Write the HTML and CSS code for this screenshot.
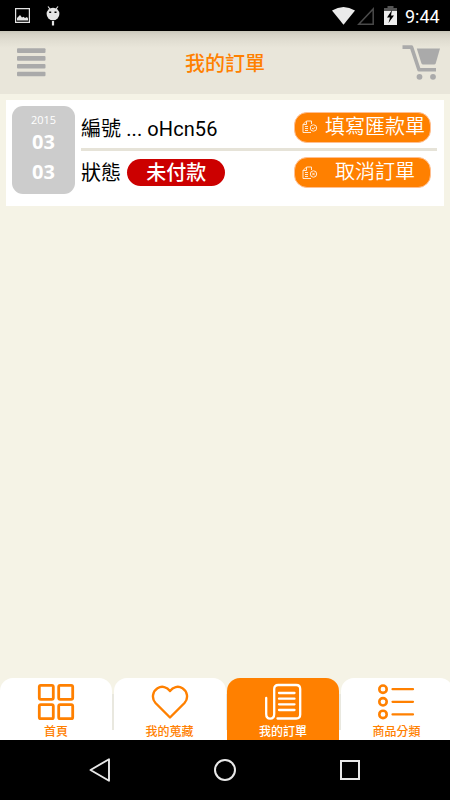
FILE: index.html
```html
<!DOCTYPE html>
<html lang="zh-Hant">
<head>
<meta charset="utf-8">
<title>我的訂單</title>
<link rel="stylesheet" href="styles.css">
</head>
<body>
<div class="screen">
  <div class="status">
    <svg class="s-pic" width="15" height="15" viewBox="0 0 15 15"><path d="M.6.6h13.8v13.8H.6z" fill="none" stroke="#e4e4e4" stroke-width="1.2"/><path d="M2 12.500V10l3-3 2 2.500 1.500-.8L10 10l2-1 1 1.500v2z" fill="#e4e4e4"/></svg>
    <svg class="s-bug" width="14" height="20" viewBox="0 0 14 20"><path d="M2 .5 4 3M12 .5 10 3" stroke="#e4e4e4" stroke-width="1.200"/><ellipse cx="7" cy="8" rx="6.400" ry="6.300" fill="#e4e4e4"/><path d="M3.200 6.300h2M8.500 6.300h2" stroke="#000" stroke-width="1.500"/><path d="M7 15v4.500" stroke="#e4e4e4" stroke-width="2.200"/></svg>
    <span class="grow"></span>
    <svg class="s-wifi" width="23" height="18" viewBox="0 0 23 18"><path d="M0 3.500Q11.500-3.500 23 3.500L11.500 17.700z" fill="#eaeaea"/></svg>
    <svg class="s-cell" width="18" height="18" viewBox="0 0 18 18"><path d="M1.800 17.200H16.200V2z" fill="none" stroke="#4a4a4a" stroke-width="1.500"/></svg>
    <svg class="s-bat" width="13" height="19" viewBox="0 0 13 19"><path d="M3.500 0h6v2H13v3H0V2h3.500z" fill="#555"/><path d="M0 5h13v14H0z" fill="#eee"/><path d="M8 4 3 11.500h3L4.500 17 10 9.500H7z" fill="#000"/></svg>
    <span class="clock">9:44</span>
  </div>
  <header class="header">
    <svg class="menu" width="29" height="29" viewBox="0 0 29 29"><g fill="#aaa"><rect y=".3" width="28.500" height="4.600" rx="1"/><rect y="8.100" width="28.500" height="4.600" rx="1"/><rect y="15.900" width="28.500" height="4.600" rx="1"/><rect y="23.700" width="28.500" height="4.600" rx="1"/></g></svg>
    <h1 class="title">我的訂單</h1>
    <svg class="cart" width="38" height="36" viewBox="0 0 38 36"><path d="M.5 2.100H9.500L17 24.800h17" fill="none" stroke="#aaa" stroke-width="3.600" stroke-linejoin="round"/><path d="M14.800 3.500H38L33.700 18.500q-.5 1-1.500 1H21q-1 0-1.500-1z" fill="#aaa"/><circle cx="17.500" cy="31.800" r="2.900" fill="#aaa"/><circle cx="31" cy="31.800" r="2.900" fill="#aaa"/></svg>
  </header>
  <main class="content">
    <article class="card">
      <div class="date"><span class="year">2015</span><b>03</b><b>03</b></div>
      <div class="info">
        <div class="row">
          <span class="label">編號 ... oHcn56</span>
          <a class="btn"><svg width="16" height="14" viewBox="0 0 16 14" fill="none" stroke="#ffe9d4" stroke-width="1"><path d="M9.500 4V1H4.500L1 4.500V12.500h8M1 4.500h3.500V1M3 6.500h3M3 8.500h3M3 10.500h3"/><circle cx="11.500" cy="8" r="3.200"/><path d="m10 8 1.200 1.200L13.200 7"/></svg><span>填寫匯款單</span></a>
        </div>
        <div class="row second">
          <span class="label">狀態</span><span class="pill">未付款</span>
          <a class="btn"><svg width="16" height="14" viewBox="0 0 16 14" fill="none" stroke="#ffe9d4" stroke-width="1"><path d="M9.500 4V1H4.500L1 4.500V12.500h8M1 4.500h3.500V1M3 6.500h3M3 8.500h3M3 10.500h3"/><circle cx="11.500" cy="8" r="3.200"/><path d="m10.200 6.700 2.600 2.600m0-2.600-2.600 2.600"/></svg><span>取消訂單</span></a>
        </div>
      </div>
    </article>
  </main>
  <nav class="tabs">
    <a class="tab"><svg width="38" height="38" viewBox="0 0 38 38" fill="none" stroke="#ff8000" stroke-width="2.800"><rect x="2.300" y="2.300" width="14" height="14" rx="1.500"/><rect x="21.700" y="2.300" width="14" height="14" rx="1.500"/><rect x="2.300" y="21.700" width="14" height="14" rx="1.500"/><rect x="21.700" y="21.700" width="14" height="14" rx="1.500"/></svg><span>首頁</span></a>
    <a class="tab"><svg width="38" height="38" viewBox="0 0 38 38" fill="none" stroke="#ff8000" stroke-width="2.400" stroke-linejoin="round"><path d="M19 34.500 4.500 20C0 15 2 8 6.500 5.200 11 2.500 16 4 19 8c3-4 8-5.500 12.500-2.800C36 8 38 15 33.500 20z"/></svg><span>我的蒐藏</span></a>
    <a class="tab active"><svg width="38" height="38" viewBox="0 0 38 38" fill="none" stroke="#fff" stroke-width="2.300" stroke-linecap="round"><path d="M2.200 15v16q0 4.600 4 4.600t4-4.600V6q0-4 4-4h18q4 0 4 4v25.500q0 4-4 4H13.500M15 10h15.500M15 15.700h15.500M15 21.300h15.500M15 27h15.500"/></svg><span>我的訂單</span></a>
    <a class="tab"><svg width="38" height="38" viewBox="0 0 38 38" fill="none" stroke="#ff8000" stroke-width="2.600" stroke-linecap="round"><circle cx="5" cy="6.200" r="3.700"/><circle cx="5" cy="18.800" r="3.700"/><circle cx="5" cy="31.400" r="3.700"/><path d="M14.500 6.200h20.500M14.500 18.800h20.500M14.500 31.400h20.500" stroke-width="2.200"/></svg><span>商品分類</span></a>
  </nav>
  <div class="navbar">
    <svg width="24" height="24" viewBox="0 0 24 24"><path d="M21 1.200v21.600L2.500 12z" fill="none" stroke="#e8e8e8" stroke-width="1.900" stroke-linejoin="round"/></svg>
    <svg width="24" height="24" viewBox="0 0 24 24"><circle cx="12" cy="12" r="10" fill="none" stroke="#e8e8e8" stroke-width="2"/></svg>
    <svg width="24" height="24" viewBox="0 0 24 24"><rect x="3" y="3" width="18" height="18" fill="none" stroke="#e8e8e8" stroke-width="2"/></svg>
  </div>
</div>
</body>
</html>
```
FILE: styles.css
```css
* { box-sizing: border-box; }
body { margin: 0; font-family: Roboto, "Noto Sans CJK TC", sans-serif; color: #000; }
svg { display: block; flex: none; }
.screen { width: 450px; height: 800px; display: flex; flex-direction: column; background: #f5f3e6; overflow: hidden; }
.status { height: 31px; background: #000; display: flex; align-items: flex-start; padding: 0 10px 0 15px; }
.grow { flex: 1; }
.s-pic { margin-top: 8px; }
.s-bug { margin: 6px 0 0 16px; }
.s-wifi { margin: 7px 2px 0 0; }
.s-cell { margin: 7px 9px 0 0; }
.s-bat { margin: 6px 8px 0 0; }
.clock { color: #fff; font-size: 18px; line-height: 33px; width: 35px; white-space: nowrap; font-weight: 400; }
.header { height: 63px; background: linear-gradient(#c8c6b9 0, #d5d2c6 3px, #e0ddd1 9px, #e9e6da 17px); display: flex; align-items: center; justify-content: space-between; padding: 0 10px 0 17px; }
.title { margin: 2px 0 0 2px; color: #ff8000; font-size: 20px; font-weight: 500; line-height: 30px; }
.cart { margin-top: 1px; }
.content { flex: 1; padding: 6px; }
.card { height: 106px; background: #fff; display: flex; gap: 6px; padding: 6px 7px 0 6px; }
.date { width: 63px; height: 88px; border-radius: 11px; background: #ccc; color: #fff; display: flex; flex-direction: column; align-items: center; font-family: "Open Sans", sans-serif; font-size: 20px; line-height: 30px; }
.year { font-size: 11px; line-height: 14px; margin-top: 7px; }
.info { flex: 1; }
.row { height: 45px; display: flex; align-items: center; border-bottom: 3px solid #e6e3d8; font-size: 20px; line-height: 30px; }
.second { border: 0; height: 43px; }
.label { white-space: nowrap; margin-top: 3px; letter-spacing: .08px; }
.second .label { margin-top: 1px; }
.pill { width: 98px; height: 27px; line-height: 29px; border-radius: 14px; background: #c00; color: #fff; text-align: center; font-weight: 500; margin-left: 6px; }
.btn { width: 137px; height: 31px; margin: 0 6px 0 auto; border: 1px solid #ffbf91; border-radius: 13px; background: #ff8000; color: #fff; display: flex; align-items: center; padding: 0 5px 0 7px; font-weight: 350; line-height: 26px; }
.btn span { flex: 1; text-align: center; margin-top: -1px; white-space: nowrap; }
.second .btn span { margin-top: -2px; }
.btn svg { margin-right: 7px; }
.tabs { height: 62px; display: grid; grid-template-columns: repeat(4, 112px); column-gap: 1.5px; background: linear-gradient(#f5f3e6 0 16px, #e9e8df 16px 52px, #fff 52px); }
.tab { background: #fff; border-radius: 13px 13px 0 0; color: #ff8000; display: flex; flex-direction: column; align-items: center; padding-top: 5px; font-size: 12px; line-height: 18px; font-weight: 500; }
.tab span { margin-top: 2px; }
.active { background: #ff8000; color: #fff; }
.navbar { height: 60px; background: #000; display: flex; align-items: center; justify-content: center; gap: 101px; }
```
